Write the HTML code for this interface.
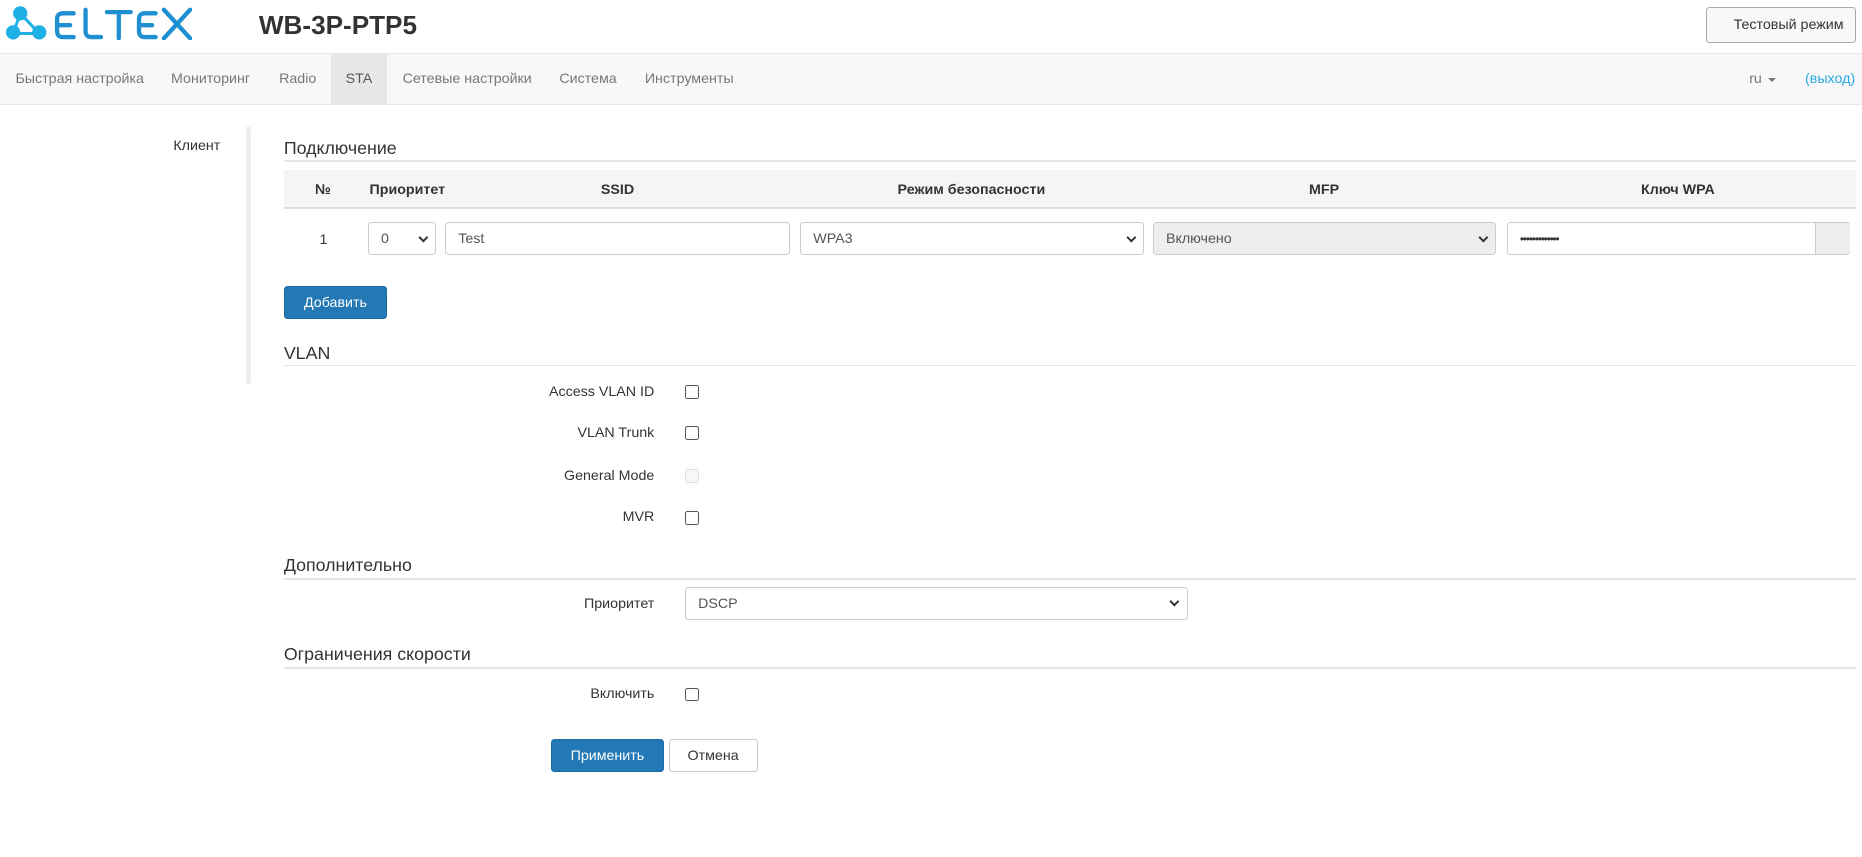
<!DOCTYPE html>
<html><head><meta charset="utf-8">
<style>
html{zoom:1.1875}
body{margin:0;width:1568px;height:722px;overflow:hidden;background:#fff;font-family:"Liberation Sans",Arial,sans-serif;font-size:12px;color:#333;position:relative}
.a{position:absolute}
.nav{left:0;top:45px;width:1568px;height:42px;background:#f8f8f8;border-top:1px solid #e7e7e7;border-bottom:1px solid #e7e7e7}
.nav span{position:absolute;top:14px;color:#777}
.h{font-size:15px;color:#333}
.line{height:1px;background:#e5e5e5}
.th{font-weight:bold;top:152px;transform:translateX(-50%)}
.inp{border:1px solid #ccc;border-radius:3px;box-sizing:border-box;height:28px;background:#fff;line-height:27px;padding-left:10px;color:#555}
.chev{position:absolute;right:7px;top:9px;width:4px;height:4px;border-right:1.8px solid #333;border-bottom:1.8px solid #333;transform:rotate(45deg)}
.lbl{right:1017px;text-align:right;color:#333}
.cb{left:577px;width:10px;height:10px;border:1px solid #555;border-radius:2px;background:#fff}
.btn{border-radius:3px;box-sizing:border-box;height:28px;line-height:27px;text-align:center}
.blue{background:#2279b5;border:1px solid #1c6aa0;color:#fff}
</style></head><body>
<svg class="a" style="left:5px;top:4px" width="165" height="30" viewBox="0 0 165 30">
<path d="M12 7 L6 24 L28 24 Z" stroke="#1fb0e6" stroke-width="2.5" fill="none"/>
<g fill="#1fb0e6"><circle cx="12" cy="7" r="6"/><circle cx="6" cy="23" r="6"/><circle cx="28" cy="23" r="6"/></g>
<g fill="none" stroke="#1e8fd0" stroke-width="3.6" stroke-linecap="round">
<path d="M57 7 H48 Q43 7 43 12 V22 Q43 27 48 27 H57 M43 17 H54"/>
<path d="M67 4 V22 Q67 27 72 27 H80"/>
<path d="M85 6 H105 M95 6 V28"/>
<path d="M126 7 H117 Q112 7 112 12 V22 Q112 27 117 27 H126 M112 17 H123"/>
<path d="M133 4 L155 28 M155 4 L133 28"/>
</g></svg>
<div class="a" style="left:218px;top:8px;font-size:22px;font-weight:bold;color:#333">WB-3P-PTP5</div>
<div class="a btn" style="left:1437px;top:6px;width:126px;height:30px;line-height:30px;border:1px solid #aaa;background:#f8f8f8;padding-left:22px;text-align:left;color:#333">Тестовый режим</div>
<div class="a nav">
<span style="left:13px">Быстрая настройка</span><span style="left:144px">Мониторинг</span><span style="left:235px">Radio</span>
<div class="a" style="left:279px;top:0;width:47px;height:42px;background:#e7e7e7"></div>
<span style="left:291px;color:#555">STA</span><span style="left:339px">Сетевые настройки</span><span style="left:471px">Система</span><span style="left:543px">Инструменты</span>
<span style="left:1473px">ru</span><div class="a" style="left:1489px;top:20px;border:4px solid transparent;border-top-color:#777"></div>
<span style="left:1520px;color:#27a9e1">(выход)</span>
</div>
<div class="a" style="left:146px;top:116px;color:#333">Клиент</div>
<div class="a" style="left:207px;top:107px;width:3px;height:216px;background:#eee;box-shadow:1px 0 2px #ddd"></div>
<div class="a h" style="left:239px;top:116px">Подключение</div>
<div class="a line" style="left:239px;top:135px;width:1324px"></div>
<div class="a" style="left:239px;top:143px;width:1324px;height:31px;background:#f5f5f5;border-bottom:2px solid #ddd"></div>
<div class="a th" style="left:272px;top:153px">№</div><div class="a th" style="left:343px;top:153px">Приоритет</div><div class="a th" style="left:520px;top:153px">SSID</div><div class="a th" style="left:818px;top:153px">Режим безопасности</div><div class="a th" style="left:1115px;top:153px">MFP</div><div class="a th" style="left:1413px;top:153px">Ключ WPA</div>
<div class="a" style="left:269px;top:195px">1</div>
<div class="a inp" style="left:310px;top:187px;width:57px">0<i class="chev"></i></div>
<div class="a inp" style="left:375px;top:187px;width:290px">Test</div>
<div class="a inp" style="left:674px;top:187px;width:289px">WPA3<i class="chev"></i></div>
<div class="a inp" style="left:971px;top:187px;width:289px;background:#eee">Включено<i class="chev"></i></div>
<div class="a inp" style="left:1269px;top:187px;width:289px;color:#333;letter-spacing:-1px;font-size:10px">•••••••••••••</div>
<div class="a" style="left:1528px;top:188px;width:29px;height:26px;background:#eee;border-left:1px solid #ccc;border-radius:0 3px 3px 0"></div>
<div class="a btn blue" style="left:239px;top:241px;width:87px">Добавить</div>
<div class="a h" style="left:239px;top:289px">VLAN</div>
<div class="a line" style="left:239px;top:307px;width:1324px"></div>
<div class="a lbl" style="top:323px">Access VLAN ID</div><div class="a cb" style="top:324px"></div>
<div class="a lbl" style="top:358px">VLAN Trunk</div><div class="a cb" style="top:359px"></div>
<div class="a lbl" style="top:394px">General Mode</div><div class="a cb" style="top:395px;border-color:#ddd;background:#f8f8f8"></div>
<div class="a lbl" style="top:429px">MVR</div><div class="a cb" style="top:430px"></div>
<div class="a h" style="left:239px;top:467px">Дополнительно</div>
<div class="a line" style="left:239px;top:487px;width:1324px"></div>
<div class="a lbl" style="top:502px">Приоритет</div>
<div class="a inp" style="left:577px;top:494px;width:423px">DSCP<i class="chev"></i></div>
<div class="a h" style="left:239px;top:542px">Ограничения скорости</div>
<div class="a line" style="left:239px;top:562px;width:1324px"></div>
<div class="a lbl" style="top:578px">Включить</div><div class="a cb" style="top:579px"></div>
<div class="a btn blue" style="left:464px;top:622px;width:95px">Применить</div>
<div class="a btn" style="left:563px;top:622px;width:75px;border:1px solid #ccc;color:#333">Отмена</div>
</body></html>
